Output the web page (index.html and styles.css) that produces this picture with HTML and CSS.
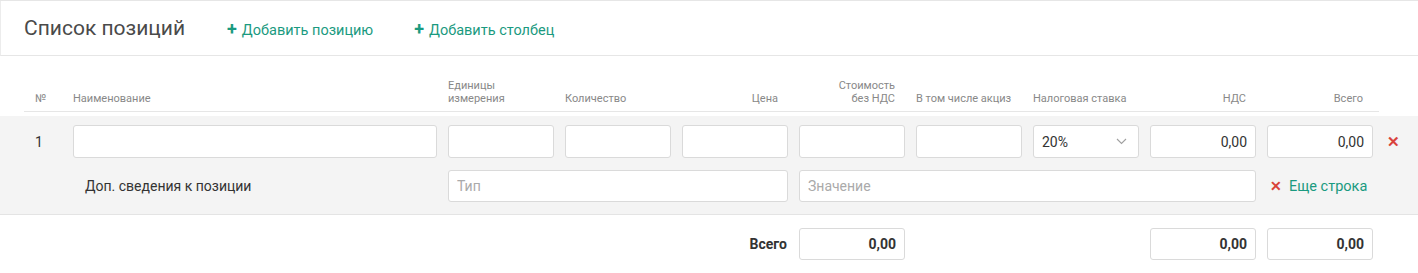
FILE: index.html
```html
<!DOCTYPE html>
<html lang="ru">
<head>
<meta charset="UTF-8">
<title>Список позиций</title>
<link rel="stylesheet" href="styles.css">
</head>
<body>

<div class="card">
    <!-- Шапка -->
    <div class="toolbar">
        <h2 class="title">Список позиций</h2>
        <a class="addLink" href="#"><span class="plus">+</span>Добавить позицию</a>
        <a class="addLink" href="#"><span class="plus">+</span>Добавить столбец</a>
    </div>

    <!-- Заголовки колонок -->
    <div class="thead">
        <div class="th">№</div>
        <div class="th">Наименование</div>
        <div class="th">Единицы<br>измерения</div>
        <div class="th">Количество</div>
        <div class="th right">Цена</div>
        <div class="th right">Стоимость<br>без НДС</div>
        <div class="th">В том числе акциз</div>
        <div class="th">Налоговая ставка</div>
        <div class="th right">НДС</div>
        <div class="th right">Всего</div>
    </div>

    <!-- Позиция -->
    <div class="position">
        <div class="row">
            <div class="num">1</div>
            <input class="field" type="text">
            <input class="field" type="text">
            <input class="field" type="text">
            <input class="field" type="text">
            <input class="field" type="text">
            <input class="field" type="text">
            <div class="select">
                <span>20%</span>
                <svg width="11" height="7" viewBox="0 0 11 7"><path d="M1 1 L5.5 5.5 L10 1" fill="none" stroke="#a0a0a0" stroke-width="1.1"/></svg>
            </div>
            <input class="field num-value" type="text" value="0,00">
            <input class="field num-value" type="text" value="0,00">
            <span class="deleteBtn">✕</span>
        </div>
        <div class="row">
            <div class="extraLabel">Доп. сведения к позиции</div>
            <input class="field typeField" type="text" placeholder="Тип">
            <input class="field valueField" type="text" placeholder="Значение">
            <a class="moreLink" href="#"><span class="moreX">✕</span>Еще строка</a>
        </div>
    </div>

    <!-- Итого -->
    <div class="row totals">
        <div class="totalLabel">Всего</div>
        <input class="field num-value bold costTotal" type="text" value="0,00">
        <input class="field num-value bold ndsTotal" type="text" value="0,00">
        <input class="field num-value bold sumTotal" type="text" value="0,00">
    </div>
</div>

</body>
</html>
```

FILE: styles.css
```css
/* Общие стили */
body {
    margin: 0;
    padding: 0;
    font-family: Roboto, Arial, sans-serif;
    color: #333;
    background: #fff;
}

.card {
    border-top: 1px solid #e6e6e6;
}

/* Шапка */
.toolbar {
    height: 54px;
    padding: 0 24px;
    display: flex;
    align-items: center;
    border-bottom: 1px solid #e6e6e6;
    border-left: 1px solid #ececec;
}

.title {
    margin: 0 42px 0 -1px;
    font-size: 21px;
    font-weight: 400;
    color: #4a4a4a;
}

.addLink {
    color: #1a9a80;
    font-size: 14.5px;
    text-decoration: none;
    margin-right: 41px;
}

.plus {
    font-size: 18px;
    font-weight: 700;
    margin-right: 5px;
}

/* Сетка колонок */
.thead, .row {
    display: grid;
    grid-template-columns: 38px 364px repeat(8, 106px) 1fr;
    column-gap: 11px;
}

.thead {
    grid-template-columns: 38px 364px repeat(8, 106px);
    margin: 23px 39px 0 24px;
    padding-bottom: 6px;
    border-bottom: 1px solid #e6e6e6;
    align-items: end;
}

.th {
    font-size: 11px;
    line-height: 13px;
    color: #888;
}

.th:first-child {
    padding-left: 11px;
}

.th.right {
    text-align: right;
    padding-right: 10px;
}

/* Позиция */
.position {
    margin-top: 4px;
    background-color: #f4f4f4;
    padding: 9px 0 12px;
    border-bottom: 1px solid #e4e4e4;
}

.row {
    padding-left: 24px;
    align-items: center;
}

.position .row + .row {
    margin-top: 12px;
}

.num {
    padding-left: 11px;
    font-size: 14px;
}

.field {
    height: 33px;
    width: 100%;
    box-sizing: border-box;
    border: 1px solid #dadada;
    border-radius: 3px;
    background: #fff;
    padding: 0 8px;
    font-family: inherit;
    font-size: 14px;
    color: #333;
}

.field::placeholder {
    color: #aaa;
}

.num-value {
    text-align: right;
}

.bold {
    font-weight: 700;
}

.select {
    height: 33px;
    box-sizing: border-box;
    border: 1px solid #dadada;
    border-radius: 3px;
    background: #fff;
    padding: 0 11px 0 8px;
    display: flex;
    align-items: center;
    justify-content: space-between;
    font-size: 14px;
}

.deleteBtn {
    color: #d9423a;
    font-size: 15px;
    font-weight: 700;
    padding-left: 3px;
}

.extraLabel {
    grid-column: 1 / 3;
    padding-left: 61px;
    font-size: 14px;
}

.typeField {
    grid-column: 3 / 6;
    height: 32px;
}

.valueField {
    grid-column: 6 / 10;
    height: 32px;
}

.moreLink {
    grid-column: 10 / 12;
    padding-left: 3px;
    color: #1a9a80;
    font-size: 14.5px;
    text-decoration: none;
}

.moreX {
    color: #d9423a;
    font-weight: 700;
    font-size: 14px;
    margin-right: 7px;
}

/* Итого */
.totals {
    padding-top: 13px;
}

.totals .field {
    height: 32px;
}

.totalLabel {
    grid-column: 1 / 6;
    text-align: right;
    font-size: 14px;
    font-weight: 700;
    padding-right: 1px;
}

.costTotal {
    grid-column: 6;
}

.ndsTotal {
    grid-column: 9;
}

.sumTotal {
    grid-column: 10;
}
```
